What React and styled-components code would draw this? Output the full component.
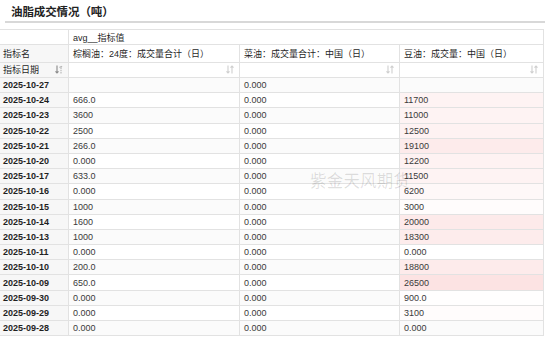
import React from "react";
import styled, { createGlobalStyle } from "styled-components";

const GlobalStyle = createGlobalStyle`
  body {
    margin: 0;
    background: #ffffff;
    font-family: "Liberation Sans", "Noto Sans CJK SC", sans-serif;
  }
`;

const Page = styled.div`
  width: 550px;
  height: 338px;
  overflow: hidden;
  background: #fff;
`;

const TitleBar = styled.div`
  margin: 0 5px 0 5px;
  height: 21px;
  padding-left: 6px;
  display: flex;
  align-items: center;
  border-bottom: 2px solid #d8d8d8;
  width: 534px;
`;

const Title = styled.h1`
  margin: 0;
  font-size: 11.5px;
  font-weight: bold;
  color: #222;
  font-family: "Noto Sans CJK SC", sans-serif;
  letter-spacing: -0.1px;
`;

const TableWrap = styled.div`
  position: relative;
  margin-top: 6px;
  width: 544px;
`;

const Grid = styled.div`
  display: grid;
  grid-template-columns: 69px 171px 160px 144px;
  border-top: 1px solid #e2e2e2;
`;

const Cell = styled.div`
  box-sizing: border-box;
  height: ${(p) => p.$h || 15.2}px;
  display: flex;
  align-items: center;
  justify-content: ${(p) => (p.$icon ? "space-between" : "flex-start")};
  padding: 0 ${(p) => (p.$icon ? 5 : 0)}px 0 ${(p) => (p.$first ? 3 : 4)}px;
  border-right: 1px solid #e2e2e2;
  border-bottom: 1px solid #e2e2e2;
  background: ${(p) => (p.$first ? "#f7f7f7" : p.$stripe ? "#fbfbfb" : "#ffffff")};
  grid-column: ${(p) => (p.$span ? `span ${p.$span}` : "auto")};
  font-size: 9px;
  white-space: nowrap;
  overflow: hidden;
  color: ${(p) => (p.$first ? "#1f1f1f" : "#3a3a3a")};
  font-weight: ${(p) => (p.$bold ? "bold" : "normal")};
`;

const HeadText = styled.span`
  font-size: 9px;
  color: #1f1f1f;
`;

const Watermark = styled.div`
  position: absolute;
  left: 310px;
  top: 139px;
  font-size: 16.5px;
  color: rgba(0, 0, 0, 0.13);
  font-family: "Noto Sans CJK SC", sans-serif;
  pointer-events: none;
  letter-spacing: 0.2px;
`;

const SortIcon = ({ active }) => (
  <svg width="8" height="9" viewBox="0 0 8 9">
    <g fill="none" strokeWidth="1.1">
      <path d="M2 0.5V8M0.5 6.3L2 8L3.5 6.3" stroke={active ? "#8a8a8a" : "#cfcfcf"} />
      <path
        d="M6 8.5V1M4.5 2.7L6 1L7.5 2.7"
        stroke={active ? "#b5b5b5" : "#cfcfcf"}
        strokeDasharray={active ? "1.5 0.8" : "none"}
      />
    </g>
  </svg>
);

const rows = [
  ["2025-10-27", "", "0.000", ""],
  ["2025-10-24", "666.0", "0.000", "11700"],
  ["2025-10-23", "3600", "0.000", "11000"],
  ["2025-10-22", "2500", "0.000", "12500"],
  ["2025-10-21", "266.0", "0.000", "19100"],
  ["2025-10-20", "0.000", "0.000", "12200"],
  ["2025-10-17", "633.0", "0.000", "11500"],
  ["2025-10-16", "0.000", "0.000", "6200"],
  ["2025-10-15", "1000", "0.000", "3000"],
  ["2025-10-14", "1600", "0.000", "20000"],
  ["2025-10-13", "1000", "0.000", "18300"],
  ["2025-10-11", "0.000", "0.000", "0.000"],
  ["2025-10-10", "200.0", "0.000", "18800"],
  ["2025-10-09", "650.0", "0.000", "26500"],
  ["2025-09-30", "0.000", "0.000", "900.0"],
  ["2025-09-29", "0.000", "0.000", "3100"],
  ["2025-09-28", "0.000", "0.000", "0.000"],
];

const maxVal = 26500;

const heat = (v) => {
  if (v === "") return null;
  const r = Math.min(1, parseFloat(v) / maxVal);
  if (!r) return null;
  const g = Math.round(255 - r * 28);
  return `rgb(${Math.round(255 - r * 3)}, ${g}, ${g})`;
};

export default function App() {
  return (
    <Page>
      <GlobalStyle />
      <TitleBar>
        <Title>油脂成交情况（吨）</Title>
      </TitleBar>
      <TableWrap>
        <Grid>
          <Cell $h={15} />
          <Cell $h={15} $span={3}>
            <HeadText>avg__指标值</HeadText>
          </Cell>

          <Cell $h={17.5} $first>
            <HeadText>指标名</HeadText>
          </Cell>
          <Cell $h={17.5}>
            <HeadText>棕榈油：24度：成交量合计（日）</HeadText>
          </Cell>
          <Cell $h={17.5}>
            <HeadText>菜油：成交量合计：中国（日）</HeadText>
          </Cell>
          <Cell $h={17.5}>
            <HeadText>豆油：成交量：中国（日）</HeadText>
          </Cell>

          <Cell $h={15.5} $first $icon>
            <HeadText>指标日期</HeadText>
            <SortIcon active />
          </Cell>
          <Cell $h={15.5} $icon>
            <span />
            <SortIcon />
          </Cell>
          <Cell $h={15.5} $icon>
            <span />
            <SortIcon />
          </Cell>
          <Cell $h={15.5} $icon>
            <span />
            <SortIcon />
          </Cell>

          {rows.map(([date, palm, rape, soy], i) => (
            <React.Fragment key={date}>
              <Cell $first $bold>
                {date}
              </Cell>
              <Cell $stripe={i % 2 === 0}>{palm}</Cell>
              <Cell $stripe={i % 2 === 0}>{rape}</Cell>
              <Cell
                $stripe={i % 2 === 0}
                style={heat(soy) ? { background: heat(soy) } : undefined}
              >
                {soy}
              </Cell>
            </React.Fragment>
          ))}
        </Grid>
        <Watermark>紫金天风期货</Watermark>
      </TableWrap>
    </Page>
  );
}
